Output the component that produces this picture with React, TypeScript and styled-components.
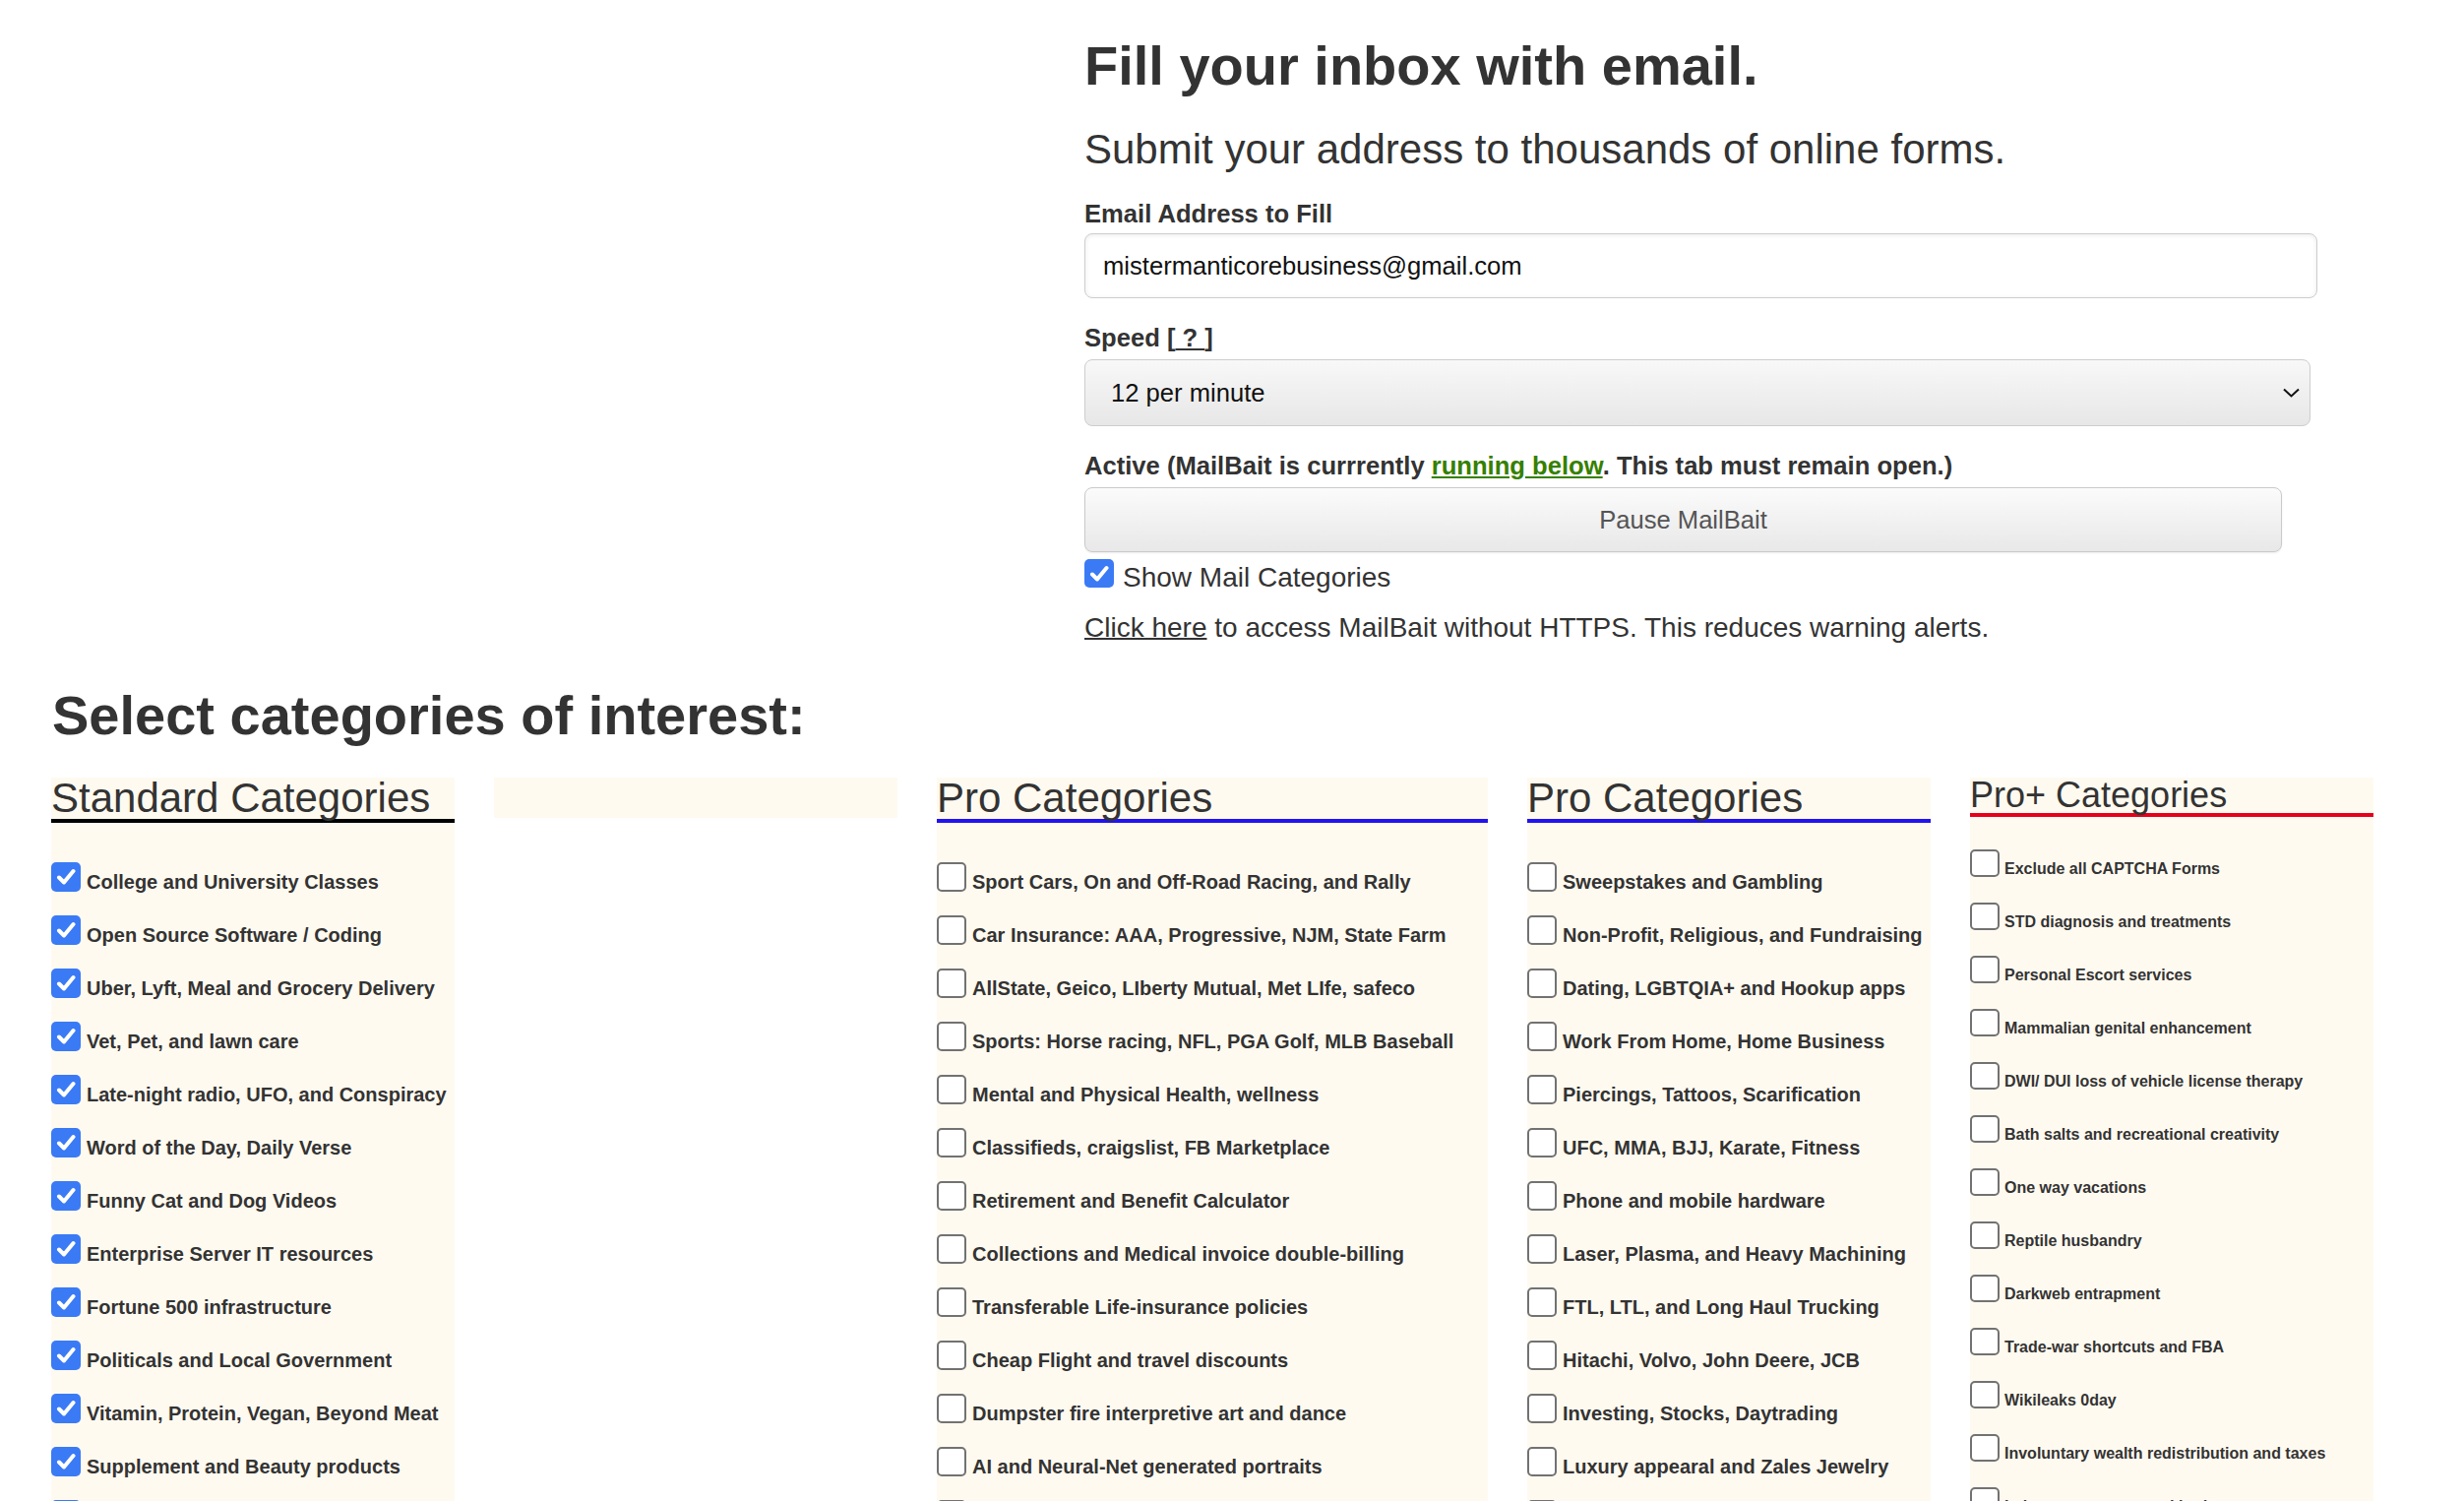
import React from 'react';
import styled, { createGlobalStyle } from 'styled-components';

const GlobalStyle = createGlobalStyle`
  body {
    margin: 0;
    background: #ffffff;
    font-family: "Liberation Sans", Arial, Helvetica, sans-serif;
    color: #333333;
  }
`;

const Page = styled.div`
  width: 2504px;
`;

const Intro = styled.section`
  padding: 35px 0 0 1102px;
`;

const Title = styled.h1`
  margin: 0;
  font-size: 56px;
  line-height: 64px;
  font-weight: 700;
  color: #333;
`;

const Lead = styled.p`
  margin: 29px 0 0;
  font-size: 42px;
  line-height: 48px;
  font-weight: 400;
  color: #333;
`;

const FieldLabel = styled.div<{ $top: number; $bottom: number }>`
  margin: ${p => p.$top}px 0 ${p => p.$bottom}px;
  font-size: 25.6px;
  line-height: 30px;
  font-weight: 700;
  color: #333;
`;

const HelpLink = styled.span`
  text-decoration: underline;
  white-space: pre;
`;

const RunLink = styled.span`
  color: #358000;
  text-decoration: underline;
`;

const TextField = styled.input`
  display: block;
  box-sizing: border-box;
  width: 1253px;
  height: 66px;
  padding: 0 18px;
  border: 1.5px solid #cdcdcd;
  border-radius: 8px;
  background: #fff;
  box-shadow: inset 0 1px 5px rgba(0, 0, 0, 0.08);
  font-family: "Liberation Sans", Arial, sans-serif;
  font-size: 25.6px;
  color: #111;
  outline: none;
`;

const SelectBox = styled.div`
  box-sizing: border-box;
  width: 1246px;
  height: 68px;
  display: flex;
  align-items: center;
  justify-content: space-between;
  padding: 0 10px 0 26px;
  border: 1.5px solid #cdcdcd;
  border-radius: 8px;
  background: linear-gradient(180deg, #f8f8f8 0%, #e7e7e7 100%);
  font-size: 25.6px;
  color: #111;
`;

const PauseButton = styled.button`
  display: block;
  box-sizing: border-box;
  width: 1217px;
  height: 66px;
  border: 1.5px solid #cacaca;
  border-radius: 8px;
  background: linear-gradient(180deg, #fbfbfb 0%, #e8e8e8 100%);
  box-shadow: 0 1px 2px rgba(0, 0, 0, 0.08);
  font-family: "Liberation Sans", Arial, sans-serif;
  font-size: 25.6px;
  color: #555;
`;

const ToggleRow = styled.label`
  display: flex;
  align-items: flex-start;
  gap: 9px;
  margin-top: 9px;
  height: 34px;
  font-size: 28px;
  line-height: 34px;
  color: #333;
`;

const Note = styled.p`
  margin: 17px 0 0;
  font-size: 28px;
  line-height: 34px;
  color: #333;

  u {
    text-decoration-thickness: 2px;
  }
`;

const Box = styled.span<{ $checked: boolean; $w: number; $h: number; $shift?: number }>`
  flex: none;
  box-sizing: border-box;
  width: ${p => p.$w}px;
  height: ${p => p.$h}px;
  margin-top: ${p => p.$shift ?? 0}px;
  border-radius: 5px;
  display: flex;
  align-items: center;
  justify-content: center;
  background: ${p => (p.$checked ? '#3b7af5' : '#ffffff')};
  border: ${p => (p.$checked ? 'none' : '2px solid #727272')};
`;

const Categories = styled.section`
  padding-left: 52px;
`;

const SectionTitle = styled.h2`
  margin: 40px 0 0 1px;
  font-size: 56px;
  line-height: 64px;
  font-weight: 700;
  color: #333;
`;

const Columns = styled.div`
  display: grid;
  grid-template-columns: 410px 410px 560px 410px 410px;
  column-gap: 40px;
  align-items: start;
  margin-top: 31px;
`;

const Column = styled.div`
  background: #fffaf0;
  min-height: 760px;
`;

const BlankColumn = styled.div`
  background: #fffaf0;
  height: 41px;
`;

const ColumnHead = styled.h3<{ $line: string; $size: number }>`
  margin: 0;
  font-size: ${p => p.$size}px;
  line-height: ${p => p.$size}px;
  font-weight: 400;
  color: #333;
  border-bottom: 4px solid ${p => p.$line};
`;

const List = styled.div<{ $top: number; $gap: number }>`
  display: flex;
  flex-direction: column;
  gap: ${p => p.$gap}px;
  padding-top: ${p => p.$top}px;
  padding-bottom: 40px;
`;

const Item = styled.label<{ $size: number; $h: number; $space: number }>`
  display: flex;
  align-items: flex-end;
  gap: ${p => p.$space}px;
  height: ${p => p.$h}px;
  font-size: ${p => p.$size}px;
  line-height: ${p => p.$size}px;
  font-weight: 700;
  color: #333;
  white-space: nowrap;
`;

const Check = () => (
  <svg width="20" height="18" viewBox="0 0 20 18">
    <path d="M3 9.5 L8 14.5 L17.5 3" fill="none" stroke="#fff" strokeWidth="4" strokeLinecap="round" strokeLinejoin="round" />
  </svg>
);

const Chevron = () => (
  <svg width="17" height="10" viewBox="0 0 17 10">
    <path d="M1 1.5 L8.5 8.5 L16 1.5" fill="none" stroke="#111" strokeWidth="2" />
  </svg>
);

const standard = [
  'College and University Classes',
  'Open Source Software / Coding',
  'Uber, Lyft, Meal and Grocery Delivery',
  'Vet, Pet, and lawn care',
  'Late-night radio, UFO, and Conspiracy',
  'Word of the Day, Daily Verse',
  'Funny Cat and Dog Videos',
  'Enterprise Server IT resources',
  'Fortune 500 infrastructure',
  'Politicals and Local Government',
  'Vitamin, Protein, Vegan, Beyond Meat',
  'Supplement and Beauty products',
  'Real Estate and Home Improvement',
];

const proA = [
  'Sport Cars, On and Off-Road Racing, and Rally',
  'Car Insurance: AAA, Progressive, NJM, State Farm',
  'AllState, Geico, LIberty Mutual, Met LIfe, safeco',
  'Sports: Horse racing, NFL, PGA Golf, MLB Baseball',
  'Mental and Physical Health, wellness',
  'Classifieds, craigslist, FB Marketplace',
  'Retirement and Benefit Calculator',
  'Collections and Medical invoice double-billing',
  'Transferable Life-insurance policies',
  'Cheap Flight and travel discounts',
  'Dumpster fire interpretive art and dance',
  'AI and Neural-Net generated portraits',
  'Pharmacy and Prescription Savings',
];

const proB = [
  'Sweepstakes and Gambling',
  'Non-Profit, Religious, and Fundraising',
  'Dating, LGBTQIA+ and Hookup apps',
  'Work From Home, Home Business',
  'Piercings, Tattoos, Scarification',
  'UFC, MMA, BJJ, Karate, Fitness',
  'Phone and mobile hardware',
  'Laser, Plasma, and Heavy Machining',
  'FTL, LTL, and Long Haul Trucking',
  'Hitachi, Volvo, John Deere, JCB',
  'Investing, Stocks, Daytrading',
  'Luxury appearal and Zales Jewelry',
  'Timeshare and Vacation Rentals',
];

const proPlus = [
  'Exclude all CAPTCHA Forms',
  'STD diagnosis and treatments',
  'Personal Escort services',
  'Mammalian genital enhancement',
  'DWI/ DUI loss of vehicle license therapy',
  'Bath salts and recreational creativity',
  'One way vacations',
  'Reptile husbandry',
  'Darkweb entrapment',
  'Trade-war shortcuts and FBA',
  'Wikileaks 0day',
  'Involuntary wealth redistribution and taxes',
  'Lab-grown organs and body parts',
];

const CategoryList: React.FC<{ items: string[]; checked?: boolean; small?: boolean }> = ({ items, checked = false, small = false }) => (
  <List $top={small ? 33 : 40} $gap={small ? 26 : 24}>
    {items.map(text => (
      <Item key={text} $size={small ? 16 : 20} $h={small ? 28 : 30} $space={small ? 5 : 6}>
        <Box $checked={checked} $w={30} $h={small ? 28 : 30}>
          {checked && <Check />}
        </Box>
        <span>{text}</span>
      </Item>
    ))}
  </List>
);

export default function App() {
  return (
    <Page>
      <GlobalStyle />
      <Intro>
        <Title>Fill your inbox with email.</Title>
        <Lead>Submit your address to thousands of online forms.</Lead>

        <FieldLabel $top={26} $bottom={5}>Email Address to Fill</FieldLabel>
        <TextField readOnly value="mistermanticorebusiness@gmail.com" />

        <FieldLabel $top={25} $bottom={7}>
          Speed [<HelpLink> ? </HelpLink>]
        </FieldLabel>
        <SelectBox>
          <span>12 per minute</span>
          <Chevron />
        </SelectBox>

        <FieldLabel $top={25} $bottom={7}>
          Active (MailBait is currrently <RunLink>running below</RunLink>. This tab must remain open.)
        </FieldLabel>
        <PauseButton>Pause MailBait</PauseButton>

        <ToggleRow>
          <Box $checked $w={30} $h={29} $shift={-2}>
            <Check />
          </Box>
          Show Mail Categories
        </ToggleRow>

        <Note>
          <u>Click here</u> to access MailBait without HTTPS. This reduces warning alerts.
        </Note>
      </Intro>

      <Categories>
        <SectionTitle>Select categories of interest:</SectionTitle>
        <Columns>
          <Column>
            <ColumnHead $line="#000000" $size={42}>Standard Categories</ColumnHead>
            <CategoryList items={standard} checked />
          </Column>
          <BlankColumn />
          <Column>
            <ColumnHead $line="#2113f0" $size={42}>Pro Categories</ColumnHead>
            <CategoryList items={proA} />
          </Column>
          <Column>
            <ColumnHead $line="#2113f0" $size={42}>Pro Categories</ColumnHead>
            <CategoryList items={proB} />
          </Column>
          <Column>
            <ColumnHead $line="#e6001c" $size={36}>Pro+ Categories</ColumnHead>
            <CategoryList items={proPlus} small />
          </Column>
        </Columns>
      </Categories>
    </Page>
  );
}
